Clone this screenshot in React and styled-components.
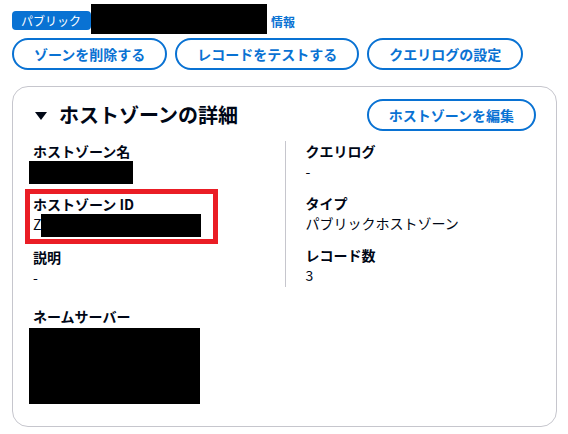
import React from 'react'
import styled, { createGlobalStyle } from 'styled-components'

const BLUE = '#0972d3'
const TEXT = '#000716'
const LINE = '#c6c6cd'
const FONT = `"Noto Sans CJK JP", "Noto Sans", sans-serif`

const GlobalStyle = createGlobalStyle`
  html, body {
    margin: 0;
    padding: 0;
    background: #ffffff;
    font-family: ${FONT};
    color: ${TEXT};
  }
`

const App = () => {
  return (
    <Page>
      <GlobalStyle />
      <TitleRow>
        <Badge>パブリック</Badge>
        <Redact w={176} h={30} />
        <InfoLink href="#">情報</InfoLink>
      </TitleRow>
      <Actions>
        <PillButton>ゾーンを削除する</PillButton>
        <PillButton>レコードをテストする</PillButton>
        <PillButton>クエリログの設定</PillButton>
      </Actions>
      <Panel>
        <PanelHeader>
          <Heading>
            <Caret viewBox="0 0 12 8" width="12" height="8">
              <path d="M0 0 L12 0 L6 8 Z" fill={TEXT} />
            </Caret>
            ホストゾーンの詳細
          </Heading>
          <PillButton>ホストゾーンを編集</PillButton>
        </PanelHeader>
        <Columns>
          <Column gap={10}>
            <Field>
              <Label>ホストゾーン名</Label>
              <Redact w={104} h={23} shift={-4} />
            </Field>
            <Field highlighted>
              <Label>ホストゾーン ID</Label>
              <IdValue>
                Z<Redact w={160} h={23} />
              </IdValue>
            </Field>
            <Field>
              <Label>説明</Label>
              <Value>-</Value>
            </Field>
          </Column>
          <Column gap={12} divided>
            <Field>
              <Label>クエリログ</Label>
              <Value>-</Value>
            </Field>
            <Field>
              <Label>タイプ</Label>
              <Value>パブリックホストゾーン</Value>
            </Field>
            <Field>
              <Label>レコード数</Label>
              <Value>3</Value>
            </Field>
          </Column>
        </Columns>
        <NameServers>
          <Label>ネームサーバー</Label>
          <Redact w={171} h={76} shift={-4} />
        </NameServers>
      </Panel>
    </Page>
  )
}

const Page = styled.div`
  padding: 4px 11px 0 12px;
  width: 568px;
  box-sizing: border-box;
`

const TitleRow = styled.div`
  display: flex;
  align-items: center;
  height: 30px;
`

const Badge = styled.span`
  background: ${BLUE};
  color: #ffffff;
  font-size: 12px;
  line-height: 19px;
  padding: 0 10px 0 9px;
  border-radius: 4px;
  margin-top: 2px;
`

const Redact = styled.div`
  display: block;
  flex-shrink: 0;
  width: ${p => p.w}px;
  height: ${p => p.h}px;
  background: #000000;
  margin-left: ${p => p.shift || 0}px;
`

const InfoLink = styled.a`
  color: ${BLUE};
  font-size: 12px;
  font-weight: 700;
  text-decoration: none;
  margin-left: 4px;
  margin-top: 5px;
`

const Actions = styled.div`
  display: flex;
  gap: 8px;
  margin-top: 4px;
`

const PillButton = styled.button`
  font-family: ${FONT};
  font-size: 14px;
  font-weight: 700;
  line-height: 20px;
  color: ${BLUE};
  background: #ffffff;
  border: 2px solid ${BLUE};
  border-radius: 20px;
  padding: 4px 20px;
  white-space: nowrap;
  cursor: pointer;
`

const Panel = styled.section`
  margin-top: 16px;
  border: 1px solid ${LINE};
  border-radius: 16px;
  padding: 12px 20px 22px 20px;
  height: 341px;
  box-sizing: border-box;
`

const PanelHeader = styled.div`
  display: flex;
  justify-content: space-between;
  align-items: center;
`

const Heading = styled.h2`
  margin: 0;
  display: flex;
  align-items: center;
  font-size: 20px;
  font-weight: 700;
  line-height: 28px;
`

const Caret = styled.svg`
  margin: 1px 12px 0 2px;
`

const Columns = styled.div`
  display: grid;
  grid-template-columns: 1fr 1fr;
  margin-top: 10px;
`

const Column = styled.div`
  display: flex;
  flex-direction: column;
  gap: ${p => p.gap}px;
  ${p => p.divided && `
    border-left: 1px solid ${LINE};
    padding-left: 20px;
  `}
`

const Field = styled.div`
  position: relative;
  ${p => p.highlighted && `
    &::after {
      content: '';
      position: absolute;
      left: -8px;
      top: -5px;
      width: 193px;
      height: 55px;
      border: 5px solid #ea1d25;
      box-sizing: border-box;
      pointer-events: none;
    }
  `}
`

const Label = styled.div`
  font-size: 14px;
  font-weight: 700;
  line-height: 20px;
`

const Value = styled.div`
  font-size: 14px;
  line-height: 20px;
`

const IdValue = styled.div`
  display: flex;
  align-items: flex-start;
  font-size: 14px;
  line-height: 20px;
`

const NameServers = styled.div`
  margin-top: 19px;
  display: flex;
  flex-direction: column;
  gap: 2px;
`

export default App
